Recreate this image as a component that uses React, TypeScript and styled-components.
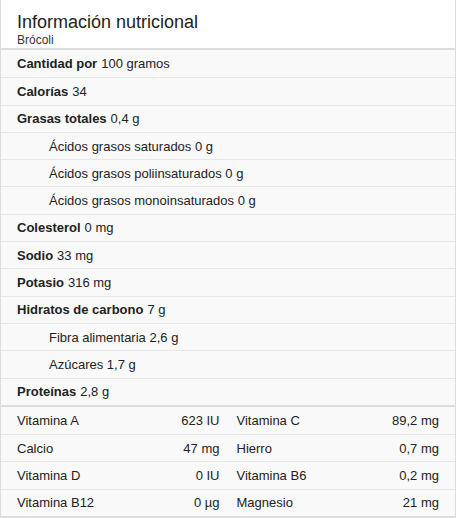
import React from "react";
import styled, { createGlobalStyle } from "styled-components";

const GlobalStyle = createGlobalStyle`
  html, body { margin: 0; padding: 0; background: #ffffff; }
  body { font-family: "Liberation Sans", Arial, sans-serif; color: #222; }
  * { box-sizing: border-box; }
`;

const Panel = styled.div`
  width: 456px;
  border-left: 1px solid #dcdcdc;
  border-right: 1px solid #dcdcdc;
  background: #ffffff;
`;

const Header = styled.div`
  padding: 11px 16px 1px 16px;
  border-bottom: 2px solid #dcdcdc;
`;

const Title = styled.div`
  font-size: 18px;
  line-height: 22px;
  color: #222;
`;

const Subtitle = styled.div`
  font-size: 12px;
  line-height: 14px;
  color: #333;
`;

const Section = styled.div`
  border-bottom: 2px solid #dcdcdc;
  background: #f9f9f9;
`;

const Row = styled.div<{ $indent?: boolean }>`
  height: 27.3px;
  display: flex;
  align-items: center;
  padding: 0 16px 0 ${(p) => (p.$indent ? 48 : 16)}px;
  font-size: 13px;
  line-height: 17px;
  color: #222;
  & + & {
    border-top: 1px solid #e6e6e6;
  }
`;

const Bold = styled.b`
  font-weight: 700;
  margin-right: 4px;
`;

const GridRow = styled.div`
  height: 27.3px;
  display: grid;
  grid-template-columns: 1fr 1fr;
  column-gap: 17px;
  align-items: center;
  padding: 0 16px;
  font-size: 13px;
  line-height: 17px;
  color: #222;
  & + & {
    border-top: 1px solid #e6e6e6;
  }
`;

const Cell = styled.div`
  display: flex;
  justify-content: space-between;
`;

type Item = { label: string; value: string; bold?: boolean; indent?: boolean };

const items: Item[] = [
  { label: "Cantidad por", value: "100 gramos", bold: true },
  { label: "Calorías", value: "34", bold: true },
  { label: "Grasas totales", value: "0,4 g", bold: true },
  { label: "Ácidos grasos saturados", value: "0 g", indent: true },
  { label: "Ácidos grasos poliinsaturados", value: "0 g", indent: true },
  { label: "Ácidos grasos monoinsaturados", value: "0 g", indent: true },
  { label: "Colesterol", value: "0 mg", bold: true },
  { label: "Sodio", value: "33 mg", bold: true },
  { label: "Potasio", value: "316 mg", bold: true },
  { label: "Hidratos de carbono", value: "7 g", bold: true },
  { label: "Fibra alimentaria", value: "2,6 g", indent: true },
  { label: "Azúcares", value: "1,7 g", indent: true },
  { label: "Proteínas", value: "2,8 g", bold: true },
];

const vitamins: [string, string, string, string][] = [
  ["Vitamina A", "623 IU", "Vitamina C", "89,2 mg"],
  ["Calcio", "47 mg", "Hierro", "0,7 mg"],
  ["Vitamina D", "0 IU", "Vitamina B6", "0,2 mg"],
  ["Vitamina B12", "0 µg", "Magnesio", "21 mg"],
];

export default function App() {
  return (
    <>
      <GlobalStyle />
      <Panel>
        <Header>
          <Title>Información nutricional</Title>
          <Subtitle>Brócoli</Subtitle>
        </Header>
        <Section>
          {items.map((it) => (
            <Row key={it.label} $indent={it.indent}>
              {it.bold ? (
                <>
                  <Bold>{it.label}</Bold>
                  {it.value}
                </>
              ) : (
                <>{it.label} {it.value}</>
              )}
            </Row>
          ))}
        </Section>
        <Section>
          {vitamins.map((v) => (
            <GridRow key={v[0]}>
              <Cell>
                <span>{v[0]}</span>
                <span>{v[1]}</span>
              </Cell>
              <Cell>
                <span>{v[2]}</span>
                <span>{v[3]}</span>
              </Cell>
            </GridRow>
          ))}
        </Section>
      </Panel>
    </>
  );
}
